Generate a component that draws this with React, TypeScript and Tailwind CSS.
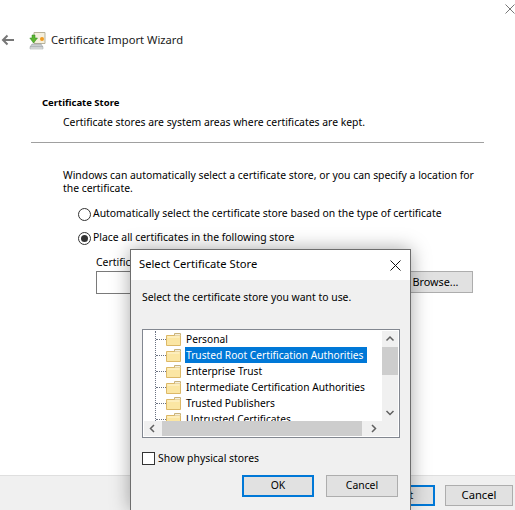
const font = { fontFamily: '"Noto Sans", sans-serif' };

function Folder() {
  return (
    <svg width="15" height="13" viewBox="0 0 15 13" className="shrink-0">
      <path d="M0.5 2.5h14v10h-14z" fill="#fbe6a3" stroke="#dcb867" />
      <path d="M8.5 2.5v-2h6v2" fill="#f5f0dc" stroke="#c9b27a" />
      <path d="M1.5 3.5h12v1h-12z" fill="#fff6d5" />
    </svg>
  );
}

const stores = [
  'Personal',
  'Trusted Root Certification Authorities',
  'Enterprise Trust',
  'Intermediate Certification Authorities',
  'Trusted Publishers',
  'Untrusted Certificates',
];

function StoreRow({ name, selected }: { name: string; selected: boolean }) {
  return (
    <div className="flex items-center h-4 shrink-0">
      <div className="w-[10px] shrink-0 border-t border-dotted border-gray-500" />
      <Folder />
      <span
        className={
          selected
            ? 'ml-[4px] px-px bg-[#0078d7] text-white h-4 leading-4 w-[182px] shrink-0 whitespace-nowrap'
            : 'ml-[4px] px-px text-black h-4 leading-4 shrink-0 whitespace-nowrap'
        }
      >
        {name}
      </span>
    </div>
  );
}

function StoreDialog() {
  return (
    <div className="absolute left-[130px] top-[249px] w-[281px] h-[261px] border border-b-0 border-[#6d6d6d] bg-[#f0f0f0] shadow-[0_0_18px_rgba(0,0,0,0.35)] flex flex-col">
      <div className="h-[30px] bg-white flex items-center justify-between pl-[8px] pr-[9px] shrink-0">
        <span className="text-[11.2px] leading-4 mb-[2px] text-black">Select Certificate Store</span>
        <svg width="11" height="11" viewBox="0 0 11 11">
          <path d="M0.5 0.5l10 10M10.5 0.5l-10 10" stroke="#111" fill="none" />
        </svg>
      </div>
      <div className="px-[11px] flex flex-col">
        <p className="text-[10.4px] mt-[9px] leading-4 text-black">Select the certificate store you want to use.</p>
        <div className="mt-[24px] w-[258px] h-[109px] border border-[#828790] bg-white relative p-px">
          <div className="h-[90px] w-[238px] overflow-hidden text-[10.2px] ml-[11px] border-l border-dotted border-gray-500">
            {stores.map((s) => (
              <StoreRow key={s} name={s} selected={s.startsWith('Trusted Root')} />
            ))}
          </div>
          <div className="absolute right-px top-px bottom-px w-[16px] bg-[#f0f0f0] flex flex-col items-center">
            <svg width="16" height="16" viewBox="0 0 16 16" className="shrink-0">
              <path d="M4.5 9.5L8 6l3.5 3.5" stroke="#606060" strokeWidth="1.5" fill="none" />
            </svg>
            <div className="w-full h-[28px] bg-[#cdcdcd]" />
            <div className="flex-1" />
            <svg width="16" height="32" viewBox="0 0 16 32" className="shrink-0">
              <path d="M4.5 7L8 10.5 11.5 7" stroke="#606060" strokeWidth="1.5" fill="none" />
            </svg>
          </div>
          <div className="absolute left-px bottom-px right-[17px] h-[15px] bg-[#f0f0f0] flex items-center">
            <svg width="18" height="15" viewBox="0 0 18 15" className="shrink-0">
              <path d="M10 4L6.5 7.5 10 11" stroke="#606060" strokeWidth="1.5" fill="none" />
            </svg>
            <div className="w-[200px] h-full bg-[#cdcdcd]" />
            <div className="flex-1" />
            <svg width="18" height="15" viewBox="0 0 18 15" className="shrink-0">
              <path d="M8 4l3.5 3.5L8 11" stroke="#606060" strokeWidth="1.5" fill="none" />
            </svg>
          </div>
        </div>
        <div className="mt-[12px] flex items-center gap-[3px]">
          <div className="w-[13px] h-[13px] border border-[#333] bg-white" />
          <span className="text-[10.4px] leading-4 text-black">Show physical stores</span>
        </div>
        <div className="mt-[9px] flex justify-end gap-[12px] pr-px">
          <button className="w-[72px] h-[22px] border-2 border-[#0078d7] bg-[#e1e1e1] text-[10.4px] text-black">OK</button>
          <button className="w-[72px] h-[22px] border border-[#adadad] bg-[#e1e1e1] text-[10.4px] text-black">Cancel</button>
        </div>
      </div>
    </div>
  );
}

export default function App() {
  return (
    <div className="relative w-[515px] h-[510px] bg-white overflow-hidden flex flex-col" style={font}>
      <div className="h-[30px] flex justify-end items-start shrink-0 pt-[4px]">
        <svg width="10" height="10" viewBox="0 0 10 10">
          <path d="M0.5 0.5l9 9M9.5 0.5l-9 9" stroke="#777" fill="none" />
        </svg>
      </div>
      <div className="flex items-center h-[20px] shrink-0">
        <svg width="14" height="12" viewBox="0 0 14 12" className="ml-px">
          <path d="M13 6H2M6.5 1.5L2 6l4.5 4.5" stroke="#777" strokeWidth="2" fill="none" />
        </svg>
        <svg width="17" height="19" viewBox="0 0 17 19" className="ml-[14px]">
          <path d="M5 1.5h11v11H5z" fill="#f4efdc" stroke="#b7b29b" />
          <circle cx="13" cy="8" r="2" fill="#f09a1f" />
          <path d="M3 13h9l2 3H1z" fill="#c9cdd0" stroke="#8d9296" strokeWidth="0.5" />
          <path d="M1 16h13v2H1z" fill="#e2e4e5" stroke="#9aa0a3" strokeWidth="0.5" />
          <path d="M6 4v3h2.5L4.5 12 .8 7H3V4z" fill="#5cb531" stroke="#2f8a18" strokeWidth="0.5" />
        </svg>
        <span className="ml-[5px] text-[11.2px] text-[#1a1a1a]">Certificate Import Wizard</span>
      </div>
      <div className="pl-[42px] mt-[46px] flex flex-col flex-1">
        <h2 className="text-[9.5px] font-bold text-black leading-[14px]">Certificate Store</h2>
        <p className="ml-[21px] mt-[4px] text-[10.4px] leading-4 text-black">Certificate stores are system areas where certificates are kept.</p>
        <div className="-ml-[11px] mt-[12px] w-[453px] border-t border-[#a0a0a0]" />
        <p className="ml-[21px] mt-[26px] w-[420px] text-[10.4px] leading-[13px] text-black">
          Windows can automatically select a certificate store, or you can specify a location for the certificate.
        </p>
        <div className="ml-[36px] mt-[11px] flex items-center gap-[2px] h-4">
          <span className="w-[13px] h-[13px] rounded-full border border-[#333] bg-white" />
          <span className="text-[10.4px] text-black">Automatically select the certificate store based on the type of certificate</span>
        </div>
        <div className="ml-[36px] mt-[8px] flex items-center gap-[2px] h-4">
          <span className="w-[13px] h-[13px] rounded-full border border-[#333] bg-white flex items-center justify-center">
            <span className="w-[7px] h-[7px] rounded-full bg-[#333]" />
          </span>
          <span className="text-[10.4px] text-black">Place all certificates in the following store</span>
        </div>
        <p className="ml-[54px] mt-[8px] text-[10.4px] leading-4 text-black">Certificate store:</p>
        <div className="ml-[54px] mt-px flex">
          <div className="w-[296px] h-[23px] border border-[#7a7a7a] bg-white" />
          <button className="ml-[6px] w-[75px] h-[22px] border border-[#adadad] bg-[#e1e1e1] text-[10.8px] text-black">Browse...</button>
        </div>
      </div>
      <div className="h-[35px] shrink-0 bg-[#f0f0f0] border-t border-[#dfdfdf] flex justify-end items-start gap-[10px] pt-[9px] pr-[2px]">
        <button className="w-[68px] h-[21px] border-2 border-[#0078d7] bg-[#e1e1e1] text-[11.2px] text-black">Next</button>
        <button className="w-[68px] h-[21px] border border-[#adadad] bg-[#e1e1e1] text-[11.2px] text-black">Cancel</button>
      </div>
      <StoreDialog />
    </div>
  );
}
